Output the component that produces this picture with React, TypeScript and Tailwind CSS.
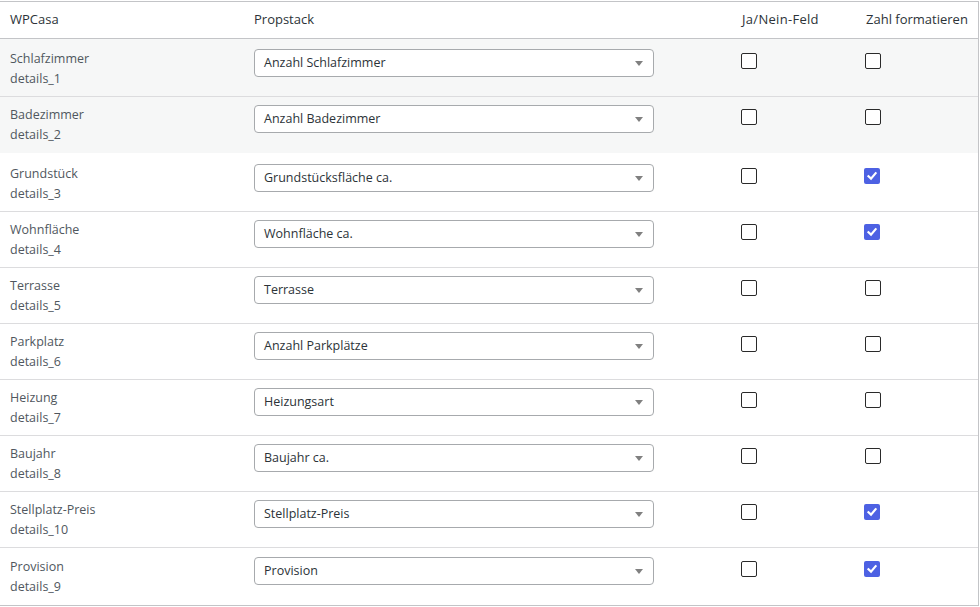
import React from "react";

type Row = {
  label: string;
  key: string;
  value: string;
  yn: boolean;
  num: boolean;
  gray?: boolean;
  pt: string;
  h: string;
  border: boolean;
};

const rows: Row[] = [
  { label: "Schlafzimmer", key: "details_1", value: "Anzahl Schlafzimmer", yn: false, num: false, gray: true, pt: "pt-[10px]", h: "h-[58px]", border: true },
  { label: "Badezimmer", key: "details_2", value: "Anzahl Badezimmer", yn: false, num: false, gray: true, pt: "pt-[8px]", h: "h-[56px]", border: false },
  { label: "Grundstück", key: "details_3", value: "Grundstücksfläche ca.", yn: false, num: true, pt: "pt-[11px]", h: "h-[59px]", border: true },
  { label: "Wohnfläche", key: "details_4", value: "Wohnfläche ca.", yn: false, num: true, pt: "pt-[8px]", h: "h-[56px]", border: true },
  { label: "Terrasse", key: "details_5", value: "Terrasse", yn: false, num: false, pt: "pt-[8px]", h: "h-[56px]", border: true },
  { label: "Parkplatz", key: "details_6", value: "Anzahl Parkplätze", yn: false, num: false, pt: "pt-[8px]", h: "h-[56px]", border: true },
  { label: "Heizung", key: "details_7", value: "Heizungsart", yn: false, num: false, pt: "pt-[8px]", h: "h-[56px]", border: true },
  { label: "Baujahr", key: "details_8", value: "Baujahr ca.", yn: false, num: false, pt: "pt-[8px]", h: "h-[56px]", border: true },
  { label: "Stellplatz-Preis", key: "details_10", value: "Stellplatz-Preis", yn: false, num: true, pt: "pt-[8px]", h: "h-[56px]", border: true },
  { label: "Provision", key: "details_9", value: "Provision", yn: false, num: true, pt: "pt-[9px]", h: "h-[57px]", border: false },
];

function Checkbox({ checked }: { checked: boolean }) {
  if (checked) {
    return (
      <div className="mt-[4px] ml-[-1px] w-[16px] h-[16px] rounded-[2px] bg-[#4d61e3] flex items-center justify-center">
        <svg width="12" height="12" viewBox="0 0 12 12">
          <path d="M2.5 6.3 L5 8.6 L9.6 3.2" fill="none" stroke="#ffffff" strokeWidth="2.2" strokeLinecap="square" strokeLinejoin="miter" />
        </svg>
      </div>
    );
  }
  return <div className="mt-[4px] w-[16px] h-[16px] rounded-[2px] border border-[#2a2a2a] bg-white" />;
}

function Select({ value }: { value: string }) {
  return (
    <div className="w-[400px] h-[28px] rounded-[4px] border border-[#a7aaad] bg-white flex items-center pl-[9px] pr-[10px] text-[12.5px] text-[#2c3338]">
      <span className="flex-1">{value}</span>
      <svg width="8" height="5" viewBox="0 0 8 5">
        <path d="M0 0 L8 0 L4 5 Z" fill="#808080" />
      </svg>
    </div>
  );
}

export default function App() {
  return (
    <div className="w-[980px] h-[607px] bg-white pt-[1px]" style={{ fontFamily: '"Open Sans", "Noto Sans", sans-serif' }}>
      <div className="w-[979px] border-t border-r border-b border-[#c3c4c7] text-[13px] leading-[19.5px]">
        <div className="h-[37px] grid grid-cols-[244px_487px_124px_1fr] items-center border-b border-[#c3c4c7] text-[#2c3338]">
          <div className="pl-[10px]">WPCasa</div>
          <div className="pl-[10px]">Propstack</div>
          <div className="pl-[11px] tracking-[0.3px]">Ja/Nein-Feld</div>
          <div className="pl-[11px]">Zahl formatieren</div>
        </div>
        {rows.map((r) => (
          <div
            key={r.key}
            className={`grid grid-cols-[244px_487px_124px_1fr] items-start box-border ${r.h} ${r.pt} ${r.gray ? "bg-[#f6f7f7]" : "bg-white"} ${r.border ? "border-b border-[#dcdcde]" : ""}`}
          >
            <div className="pl-[10px] text-[#50575e] text-[12.5px]">
              <div>{r.label}</div>
              <div>{r.key}</div>
            </div>
            <div className="pl-[10px]">
              <Select value={r.value} />
            </div>
            <div className="pl-[10px]">
              <Checkbox checked={r.yn} />
            </div>
            <div className="pl-[10px]">
              <Checkbox checked={r.num} />
            </div>
          </div>
        ))}
      </div>
    </div>
  );
}
